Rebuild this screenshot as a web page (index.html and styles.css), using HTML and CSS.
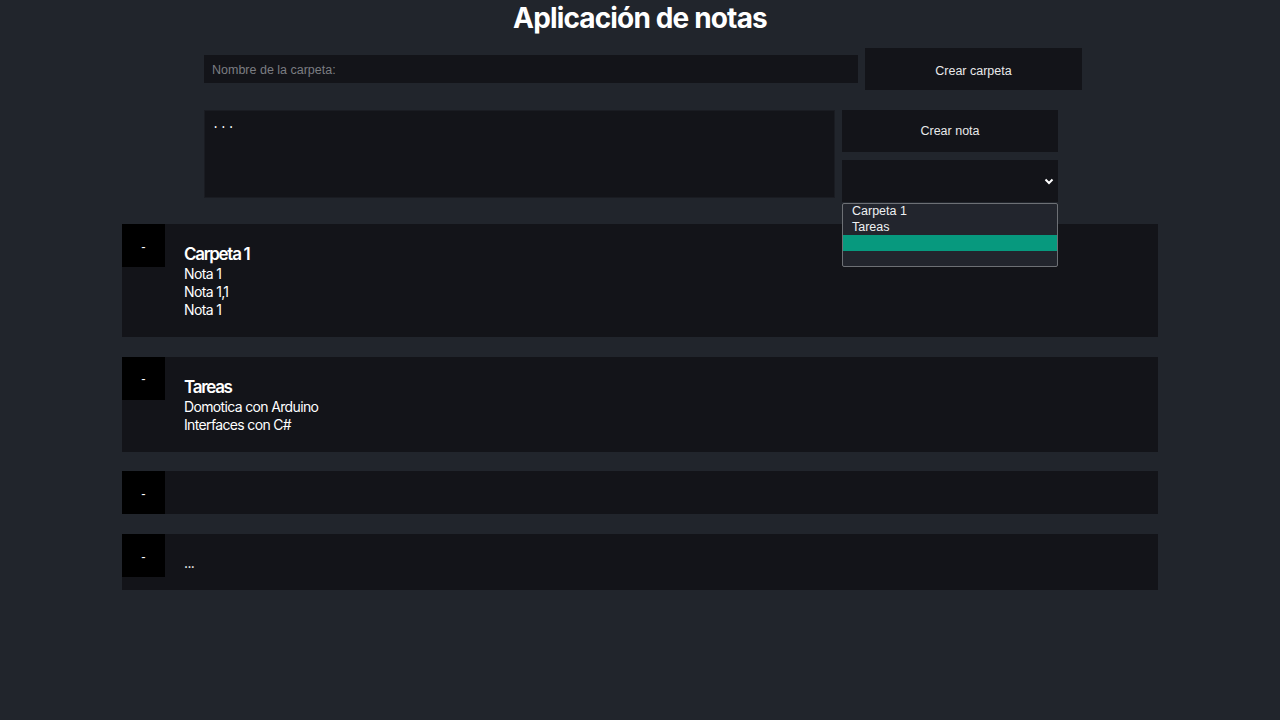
FILE: index.html
```html
<!DOCTYPE html>
<html lang="es">
<head>
<meta charset="utf-8">
<title>Aplicación de notas</title>
<link rel="stylesheet" href="styles.css">
</head>
<body>
<h1 class="title">Aplicación de notas</h1>

<div class="forms">
  <div class="row-folder">
    <input class="field" type="text" placeholder="Nombre de la carpeta:">
    <button class="btn btn-folder">Crear carpeta</button>
  </div>

  <div class="row-note">
    <textarea class="note-text">...</textarea>
    <div class="note-side">
      <button class="btn">Crear nota</button>
      <div class="select-wrap">
        <div class="select">
          <svg class="chevron" width="10" height="7" viewBox="0 0 10 7"><path d="M1.5 1.5 L5 5 L8.5 1.5" fill="none" stroke="#fff" stroke-width="2"/></svg>
        </div>
        <ul class="options">
          <li class="option">Carpeta 1</li>
          <li class="option">Tareas</li>
          <li class="option option-active"></li>
          <li class="option"></li>
        </ul>
      </div>
    </div>
  </div>
</div>

<div class="folders">
  <section class="folder">
    <button class="toggle">-</button>
    <div class="folder-body">
      <h3 class="folder-name">Carpeta 1</h3>
      <p class="note">Nota 1</p>
      <p class="note">Nota 1,1</p>
      <p class="note">Nota 1</p>
    </div>
  </section>
  <section class="folder">
    <button class="toggle">-</button>
    <div class="folder-body">
      <h3 class="folder-name">Tareas</h3>
      <p class="note">Domotica con Arduino</p>
      <p class="note">Interfaces con C#</p>
    </div>
  </section>
  <section class="folder">
    <button class="toggle">-</button>
    <div class="folder-body"></div>
  </section>
  <section class="folder">
    <button class="toggle">-</button>
    <div class="folder-body">
      <p class="note">...</p>
    </div>
  </section>
</div>
</body>
</html>
```
FILE: styles.css
```css
* { box-sizing: border-box; }

body {
  margin: 0;
  background: #21252c;
  color: #fff;
  font-family: Inter, "Noto Sans", sans-serif;
}

.title {
  margin: 0;
  height: 36px;
  line-height: 36px;
  text-align: center;
  font-size: 28px;
  font-weight: 700;
  letter-spacing: -0.85px;
}

.forms {
  width: 1036px;
  margin: 0 auto;
  padding-left: 82px;
}

.row-folder {
  display: flex;
  align-items: center;
  gap: 7px;
  margin-top: 12px;
}

.field {
  width: 654px;
  height: 28px;
  border: none;
  background: #131419;
  color: #fff;
  padding: 2px 8px 0;
  font-family: "Liberation Sans", Arial, sans-serif;
  font-size: 12.5px;
  outline: none;
}
.field::placeholder { color: #7b7d82; }

.btn {
  width: 216px;
  height: 42px;
  border: none;
  background: #131419;
  color: #e9e9ea;
  font-family: "Liberation Sans", Arial, sans-serif;
  font-size: 12.5px;
  padding: 0;
}
.btn-folder {
  width: 217px;
  padding-top: 3px;
}

.row-note {
  display: flex;
  gap: 7px;
  margin-top: 20px;
}

.note-text {
  width: 631px;
  height: 88px;
  border: 1px solid #1a1c22;
  background: #131419;
  color: #fff;
  resize: none;
  padding: 7px 7px 6px;
  font-family: "Liberation Mono", monospace;
  font-size: 12px;
  letter-spacing: 0.6px;
  outline: none;
}

.note-side {
  display: flex;
  flex-direction: column;
  gap: 8px;
}

.select-wrap { position: relative; }

.select {
  width: 216px;
  height: 42px;
  background: #131419;
  display: flex;
  align-items: center;
  justify-content: flex-end;
  padding-right: 4px;
}

.options {
  position: absolute;
  top: 43px;
  left: 0;
  width: 216px;
  margin: 0;
  padding: 0;
  list-style: none;
  background: #22252d;
  border: 1px solid #6d7075;
  border-radius: 2px;
  z-index: 2;
  font-family: "Liberation Sans", Arial, sans-serif;
  font-size: 12.5px;
  color: #eef0f2;
}
.option {
  height: 15.5px;
  line-height: 14px;
  padding-left: 9px;
}
.option-active { background: #07997e; }

.folders {
  width: 1036px;
  margin: 22px auto 0;
  display: flex;
  flex-direction: column;
  gap: 19.7px;
}

.folder {
  display: flex;
  align-items: flex-start;
  background: #131419;
}

.toggle {
  flex: none;
  width: 43px;
  height: 43px;
  border: none;
  background: #000;
  color: #fff;
  font-family: "Liberation Sans", Arial, sans-serif;
  font-size: 13px;
  padding: 1px 0 0;
}

.folder-body {
  padding: 20px 19px 18px;
}

.folder-name {
  margin: 0;
  font-size: 17px;
  line-height: 21px;
  font-weight: 600;
  letter-spacing: -1.3px;
}

.note {
  margin: 0;
  font-size: 14px;
  line-height: 18px;
  letter-spacing: -0.65px;
}
```
